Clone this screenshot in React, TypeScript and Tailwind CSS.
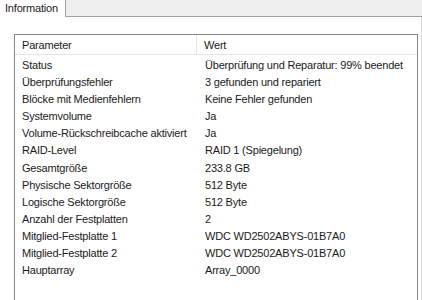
const rows: [string, string][] = [
  ["Status", "Überprüfung und Reparatur: 99% beendet"],
  ["Überprüfungsfehler", "3 gefunden und repariert"],
  ["Blöcke mit Medienfehlern", "Keine Fehler gefunden"],
  ["Systemvolume", "Ja"],
  ["Volume-Rückschreibcache aktiviert", "Ja"],
  ["RAID-Level", "RAID 1 (Spiegelung)"],
  ["Gesamtgröße", "233.8 GB"],
  ["Physische Sektorgröße", "512 Byte"],
  ["Logische Sektorgröße", "512 Byte"],
  ["Anzahl der Festplatten", "2"],
  ["Mitglied-Festplatte 1", "WDC WD2502ABYS-01B7A0"],
  ["Mitglied-Festplatte 2", "WDC WD2502ABYS-01B7A0"],
  ["Hauptarray", "Array_0000"],
];

export default function App() {
  return (
    <div className="w-[422px] h-[300px] overflow-hidden bg-white text-[11px] tracking-[-0.2px] text-[#1a1a1a] font-['Liberation_Sans',Arial,sans-serif]">
      {/* tab strip */}
      <div className="flex h-[17px]">
        <div className="w-[66px] border-r border-[#a0a0a0] bg-white pl-[5px] leading-[17px]">
          Information
        </div>
        <div className="flex-1 bg-[#f0f0f0] border-b border-[#a0a0a0]" />
      </div>

      {/* panel */}
      <div className="flex pl-[14px] pt-[17px] pr-[2px] border-r border-[#d9d9d9] h-[283px]">
        <div className="w-[404px] h-[300px] border border-[#828790]">
          <div className="flex h-[20px] border-b border-[#e5e5e5] leading-[20px]">
            <div className="w-[182px] border-r border-[#e5e5e5] pl-[7px]">Parameter</div>
            <div className="flex-1 pl-[7px]">Wert</div>
          </div>
          <div className="pt-[2px]">
            {rows.map(([k, v]) => (
              <div key={k} className="flex h-[17.1px] leading-[17px]">
                <div className="w-[183px] pl-[7px] whitespace-nowrap">{k}</div>
                <div className="flex-1 pl-[7px] whitespace-nowrap">{v}</div>
              </div>
            ))}
          </div>
        </div>
      </div>
    </div>
  );
}
